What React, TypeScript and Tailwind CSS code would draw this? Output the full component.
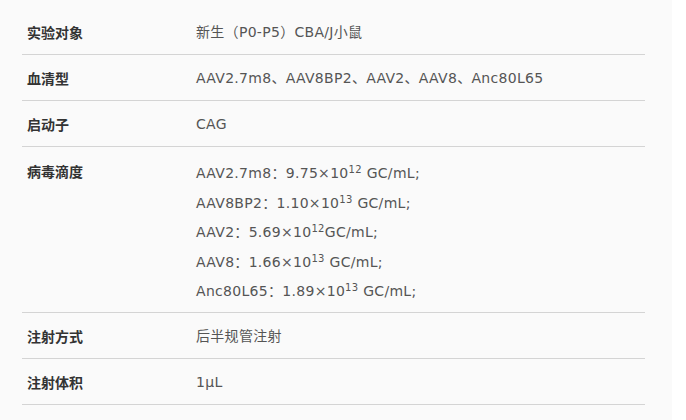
const rows: { label: string; values: React.ReactNode[] }[] = [
  { label: "实验对象", values: ["新生（P0-P5）CBA/J小鼠"] },
  { label: "血清型", values: ["AAV2.7m8、AAV8BP2、AAV2、AAV8、Anc80L65"] },
  { label: "启动子", values: ["CAG"] },
  {
    label: "病毒滴度",
    values: [
      <>AAV2.7m8：9.75×10<sup className="text-[10px]">12</sup> GC/mL;</>,
      <>AAV8BP2：1.10×10<sup className="text-[10px]">13</sup> GC/mL;</>,
      <>AAV2：5.69×10<sup className="text-[10px]">12</sup>GC/mL;</>,
      <>AAV8：1.66×10<sup className="text-[10px]">13</sup> GC/mL;</>,
      <>Anc80L65：1.89×10<sup className="text-[10px]">13</sup> GC/mL;</>,
    ],
  },
  { label: "注射方式", values: ["后半规管注射"] },
  { label: "注射体积", values: ["1μL"] },
];

export default function App() {
  return (
    <div className="w-[686px] h-[420px] bg-white flex">
      <div className="w-[672px] h-full bg-[#fafafa] pl-[22px] pt-[9px]">
        <div className="w-[623px] flex flex-col">
          {rows.map((row) => {
            const multi = row.values.length > 1;
            return (
              <div
                key={row.label}
                className={`flex border-b border-[#d4d4d4] text-[14px] ${multi ? "pt-[13px] pb-[8px]" : "pt-[13px] pb-[12px]"}`}
              >
                <div
                  className={`w-[174px] pl-[5px] font-bold text-[#333] ${multi ? "leading-[22px]" : "leading-[20px]"}`}
                  style={{ fontFamily: '"Noto Sans CJK SC", sans-serif' }}
                >
                  {row.label}
                </div>
                <div
                  className={`flex flex-col text-[#555] tracking-[0.3px] ${multi ? "gap-[3.5px]" : ""}`}
                  style={{ fontFamily: '"DejaVu Sans", "Noto Sans CJK SC", sans-serif' }}
                >
                  {row.values.map((v, i) => (
                    <div key={i} className={multi ? "leading-[26px]" : "leading-[20px]"}>
                      {v}
                    </div>
                  ))}
                </div>
              </div>
            );
          })}
        </div>
      </div>
    </div>
  );
}
